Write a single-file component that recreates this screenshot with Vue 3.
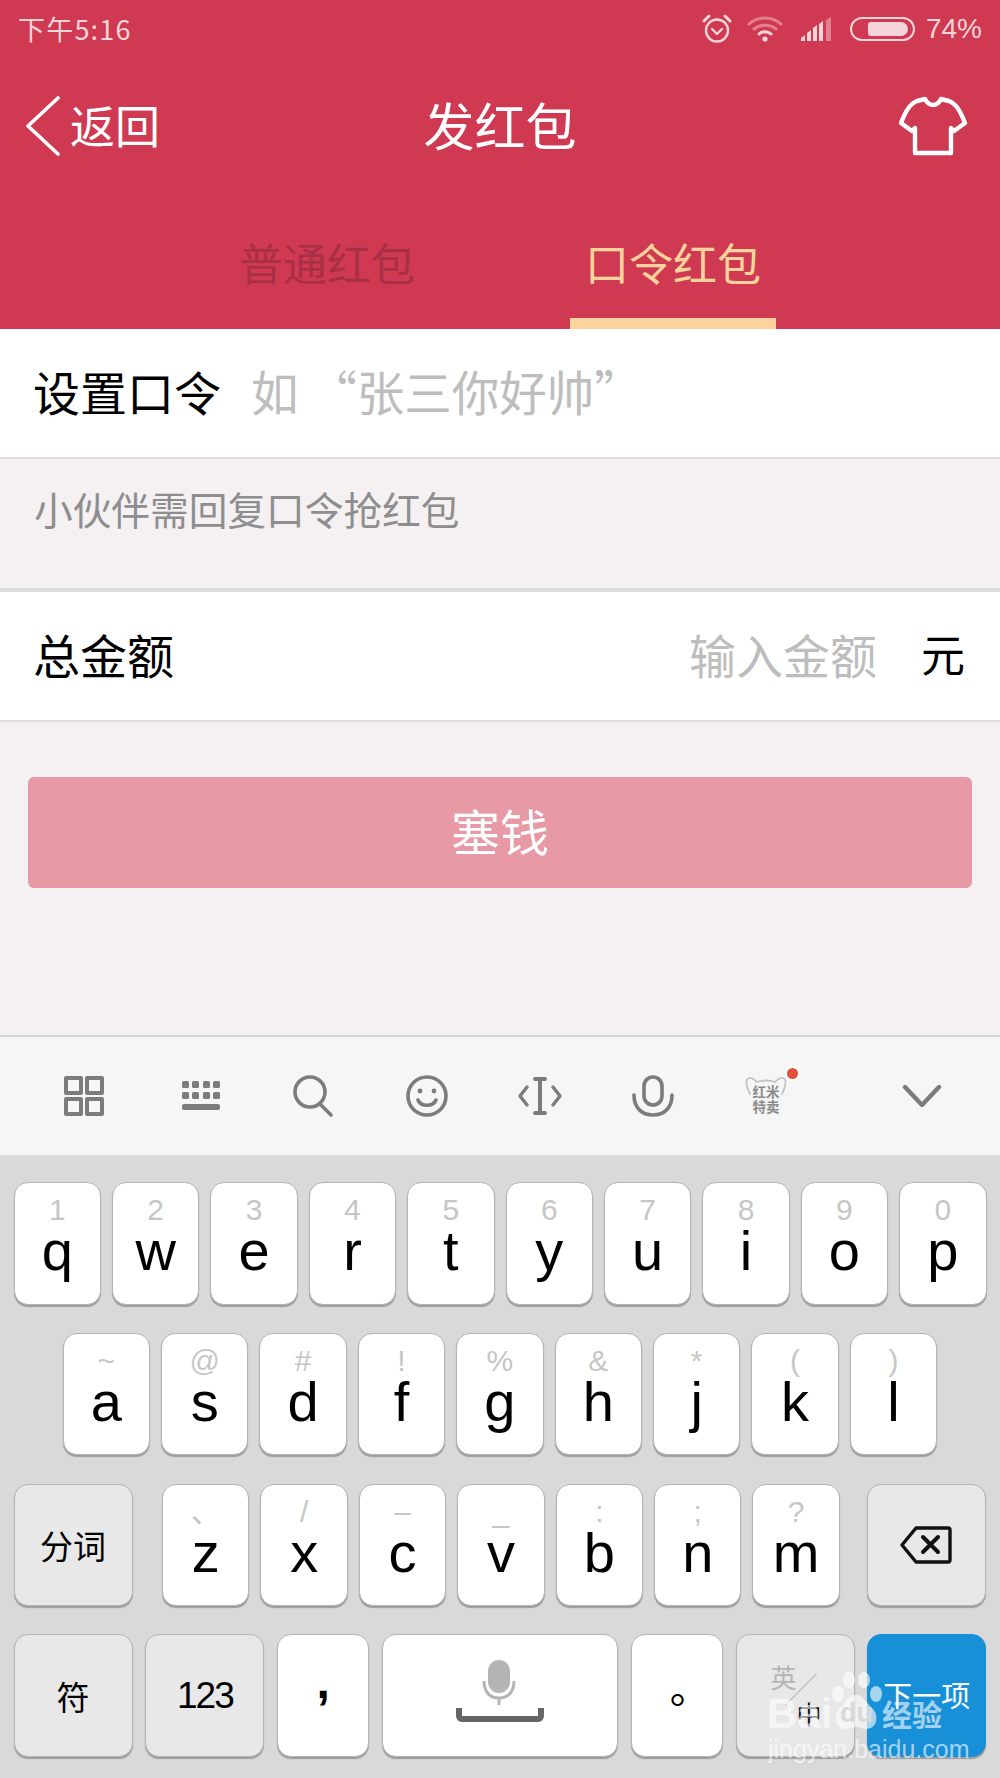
<template>
  <div class="page">
    <header class="head">
      <div class="status">
        <span class="time">下午5:16</span>
        <div class="status-right">
          <svg class="st-alarm" width="30" height="30" viewBox="0 0 30 30" fill="none" stroke="#f5d5da" stroke-width="2.4">
            <circle cx="15" cy="16.5" r="11" />
            <path d="M10 15l5 5 5-5" stroke-linecap="round" stroke-linejoin="round" />
            <path d="M2 7l5-5M28 7l-5-5" stroke-linecap="round" stroke-width="3" />
          </svg>
          <svg class="st-wifi" width="36" height="26" viewBox="0 0 36 26" fill="none" stroke-linecap="round">
            <path d="M2 8c9-8 23-8 32 0" stroke="#e2808f" stroke-width="3" />
            <path d="M7 13c6-5 16-5 22 0" stroke="#e2808f" stroke-width="3" />
            <path d="M12 18c3-3 9-3 12 0" stroke="#f5d5da" stroke-width="3" />
            <circle cx="18" cy="23" r="2.6" fill="#f5d5da" />
          </svg>
          <svg class="st-signal" width="33" height="24" viewBox="0 0 33 24" fill="#f5d5da">
            <path d="M0 24v-3l4-3v6zM6 24v-8l4-3v11zM12 24V11l4-3v16zM18 24V7l4-3v20z" />
            <path d="M25 24V3l5-3v24z" fill="#e2808f" />
          </svg>
          <span class="battery"><span class="battery-fill" /></span>
          <span class="percent">74%</span>
        </div>
      </div>

      <nav class="nav">
        <div class="back">
          <svg width="36" height="60" viewBox="0 0 36 60" fill="none" stroke="#fff" stroke-width="3.6" stroke-linecap="round" stroke-linejoin="round">
            <path d="M33 2L3 30l30 28" />
          </svg>
          <span>返回</span>
        </div>
        <h1>发红包</h1>
        <svg class="shirt" width="70" height="60" viewBox="0 0 70 60" fill="none" stroke="#fff" stroke-width="4.4" stroke-linejoin="round">
          <path d="M27 3c2 4 5 6 8 6s6-2 8-6l8 2c8 3 12 12 16 22l-11 8-3-3v25H17V32l-3 3-11-8c4-10 8-19 16-22z" />
        </svg>
      </nav>

      <div class="tabs">
        <div class="tab">普通红包</div>
        <div class="tab tab--active">口令红包</div>
      </div>
    </header>

    <div class="row">
      <span class="label">设置口令</span>
      <span class="hint">如 “张三你好帅”</span>
    </div>
    <p class="note">小伙伴需回复口令抢红包</p>
    <div class="row row--amount">
      <span class="label">总金额</span>
      <span class="hint amount-hint">输入金额</span>
      <span class="unit">元</span>
    </div>

    <div class="submit-wrap">
      <button class="submit" type="button">塞钱</button>
    </div>

    <div class="toolbar">
      <svg class="tb-grid" width="40" height="40" viewBox="0 0 40 40" fill="none" stroke="#7c7c7c" stroke-width="4" stroke-linejoin="round">
        <rect x="2" y="2" width="15" height="15" /><rect x="23" y="2" width="15" height="15" />
        <rect x="2" y="23" width="15" height="15" /><rect x="23" y="23" width="15" height="15" />
      </svg>
      <svg width="40" height="30" viewBox="0 0 40 30" fill="#7c7c7c">
        <rect x="1" y="0" width="7" height="7" rx="1.5" /><rect x="11" y="0" width="7" height="7" rx="1.5" />
        <rect x="22" y="0" width="7" height="7" rx="1.5" /><rect x="32" y="0" width="7" height="7" rx="1.5" />
        <rect x="1" y="11" width="7" height="7" rx="1.5" /><rect x="11" y="11" width="7" height="7" rx="1.5" />
        <rect x="22" y="11" width="7" height="7" rx="1.5" /><rect x="32" y="11" width="7" height="7" rx="1.5" />
        <rect x="1" y="23" width="38" height="6" rx="2" />
      </svg>
      <svg width="42" height="42" viewBox="0 0 42 42" fill="none" stroke="#7c7c7c" stroke-width="3.6" stroke-linecap="round">
        <circle cx="17" cy="17" r="15" /><path d="M27 29l11 11" />
      </svg>
      <svg width="42" height="42" viewBox="0 0 42 42" fill="none" stroke="#7c7c7c" stroke-width="3.6" stroke-linecap="round">
        <circle cx="21" cy="21" r="19" />
        <circle cx="14" cy="16" r="2.4" fill="#7c7c7c" stroke="none" /><circle cx="28" cy="16" r="2.4" fill="#7c7c7c" stroke="none" />
        <path d="M12 25c3 7 15 7 18 0" />
      </svg>
      <svg width="44" height="38" viewBox="0 0 44 38" fill="none" stroke="#7c7c7c" stroke-width="3.4" stroke-linecap="round" stroke-linejoin="round">
        <path d="M22 2v34M17 2h10M17 36h10" stroke-width="4" />
        <path d="M9 10L2 19l7 9M35 10l7 9-7 9" />
      </svg>
      <svg width="42" height="42" viewBox="0 0 42 42" fill="none" stroke="#7c7c7c" stroke-width="3.6" stroke-linecap="round">
        <rect x="12" y="2" width="18" height="28" rx="9" />
        <path d="M2 20c0 13 8 20 19 20s19-7 19-20" />
      </svg>
      <div class="tb-redmi">
        <svg width="42" height="20" viewBox="0 0 42 20" fill="none" stroke="#c4c4c4" stroke-width="1.8" stroke-linecap="round">
          <path d="M5 18C1 10 0 3 4 2c3-1 6 2 8 4 5-2 13-2 18 0 2-2 5-5 8-4 4 1 3 8-1 16" />
        </svg>
        <span class="redmi-text">红米<br>特卖</span>
        <i class="redmi-dot" />
      </div>
      <svg class="tb-last" width="40" height="24" viewBox="0 0 40 24" fill="none" stroke="#7c7c7c" stroke-width="4.4" stroke-linecap="round" stroke-linejoin="round">
        <path d="M3 3l17 18L37 3" />
      </svg>
    </div>

    <div class="keyboard">
      <div class="kb-row">
        <div v-for="k in row1" :key="k[0]" class="key">
          <span class="key-sub">{{ k[1] }}</span>
          <span class="key-main">{{ k[0] }}</span>
        </div>
      </div>
      <div class="kb-row kb-row--2">
        <div v-for="k in row2" :key="k[0]" class="key">
          <span class="key-sub">{{ k[1] }}</span>
          <span class="key-main">{{ k[0] }}</span>
        </div>
      </div>
      <div class="kb-row">
        <div class="key key--fn key--wide key--split">分词</div>
        <div v-for="k in row3" :key="k[0]" class="key">
          <span class="key-sub">{{ k[1] }}</span>
          <span class="key-main">{{ k[0] }}</span>
        </div>
        <div class="key key--fn key--wide key--del">
          <svg width="52" height="38" viewBox="0 0 52 38" fill="none" stroke="#111" stroke-width="3.4" stroke-linejoin="round" stroke-linecap="round">
            <path d="M16 2h32a2 2 0 0 1 2 2v30a2 2 0 0 1-2 2H16L2 19z" />
            <path d="M23 11l15 15M38 11L23 26" stroke-width="4" />
          </svg>
        </div>
      </div>
      <div class="kb-row kb-row--last">
        <div class="key key--fn key--wide">符</div>
        <div class="key key--fn key--wide key--num">123</div>
        <div class="key key--comma"><span>,</span></div>
        <div class="key key--space">
          <svg width="88" height="64" viewBox="0 0 88 64" fill="none">
            <rect x="32" y="1" width="22" height="33" rx="11" fill="#b4b4b4" />
            <path d="M28 22c0 11 6 17 15 17s15-6 15-17" stroke="#b4b4b4" stroke-width="3" />
            <path d="M43 38v8" stroke="#b4b4b4" stroke-width="3" />
            <path d="M3 49v8a3 3 0 0 0 3 3h76a3 3 0 0 0 3-3v-8" stroke="#666" stroke-width="6" />
          </svg>
        </div>
        <div class="key key--period"><span>。</span></div>
        <div class="key key--fn key--wide key--lang">
          <span class="lang-en">英</span>
          <i class="lang-slash" />
          <span class="lang-zh">中</span>
        </div>
        <div class="key key--wide key--next">下一项</div>
      </div>

      <!-- watermark sits on top of the last keys -->
      <div class="mark">
        <span class="mark-bai">Bai</span>
        <svg class="mark-paw" width="54" height="60" viewBox="0 0 54 60" fill="rgb(255 255 255 / 62%)">
          <ellipse cx="9" cy="23" rx="6" ry="8" />
          <ellipse cx="20" cy="9" rx="6" ry="8" />
          <ellipse cx="35" cy="9" rx="6" ry="8" />
          <ellipse cx="47" cy="23" rx="6" ry="8" />
          <path d="M27 24c8 0 10 8 16 13 7 6 6 21-6 21-4 0-7-2-10-2s-6 2-10 2C5 58 4 43 11 37c6-5 8-13 16-13z" />
        </svg>
        <span class="mark-du">du</span>
        <span class="mark-cn">经验</span>
        <span class="mark-url">jingyan.baidu.com</span>
      </div>
    </div>
  </div>
</template>

<script setup>
const row1 = [['q', '1'], ['w', '2'], ['e', '3'], ['r', '4'], ['t', '5'], ['y', '6'], ['u', '7'], ['i', '8'], ['o', '9'], ['p', '0']]
const row2 = [['a', '~'], ['s', '@'], ['d', '#'], ['f', '!'], ['g', '%'], ['h', '&'], ['j', '*'], ['k', '('], ['l', ')']]
const row3 = [['z', '、'], ['x', '/'], ['c', '–'], ['v', '_'], ['b', ':'], ['n', ';'], ['m', '?']]
</script>

<style scoped>
.page {
  width: 1000px;
  height: 1778px;
  overflow: hidden;
  background: #f5f0f2;
  font-family: "Noto Sans CJK SC", "Liberation Sans", sans-serif;
  color: #000;
}

.head {
  height: 329px;
  background: #cf3a52;
  color: #fff;
}

.status {
  display: flex;
  align-items: center;
  justify-content: space-between;
  height: 57px;
  padding: 0 18px;
}

.time {
  color: #f5d5da;
  font-size: 27px;
  letter-spacing: 1.2px;
}

.status-right {
  display: flex;
  align-items: center;
  color: #f5d5da;
}

.st-wifi {
  margin-left: 15px;
}

.st-signal {
  margin-left: 18px;
}

.battery {
  display: block;
  width: 65px;
  height: 24px;
  margin-left: 16px;
  padding: 3px 5px 3px 16px;
  border: 2px solid #f5d5da;
  border-radius: 12px;
  box-sizing: border-box;
}

.battery-fill {
  display: block;
  height: 100%;
  border-radius: 3px 7px 7px 3px;
  background: #f5d5da;
}

.percent {
  margin-left: 11px;
  font-family: "Liberation Sans", sans-serif;
  font-size: 28px;
}

.nav {
  display: flex;
  align-items: center;
  justify-content: space-between;
  height: 60px;
  margin-top: 39px;
  padding: 0 32px 0 25px;
  position: relative;
}

.back {
  display: flex;
  align-items: center;
  gap: 9px;
  font-size: 45px;
}

.back span {
  margin-bottom: 4px;
}

.nav h1 {
  position: absolute;
  left: 0;
  right: 0;
  top: -2px;
  margin: 0;
  text-align: center;
  font-size: 51px;
  font-weight: 400;
  line-height: 60px;
  pointer-events: none;
}

.tabs {
  display: flex;
  justify-content: center;
  gap: 140px;
  height: 173px;
  padding-top: 70px;
  box-sizing: border-box;
}

.tab {
  width: 206px;
  height: 103px;
  box-sizing: border-box;
  color: #a82f45;
  font-size: 44px;
  line-height: 72px;
  text-align: center;
}

.tab--active {
  border-bottom: 11px solid #fcd49b;
  color: #fcd49b;
}

.row {
  display: flex;
  align-items: center;
  height: 122px;
  padding: 0 35px 6px 33px;
  border-bottom: 2px solid #dedede;
  background: #fff;
}

.label {
  font-size: 47px;
}

.hint {
  margin-left: 30px;
  color: #bdbdbd;
  font-size: 47.5px;
  white-space: nowrap;
}

.note {
  height: 133px;
  margin: 0;
  padding: 27px 34px 0;
  box-sizing: border-box;
  border-bottom: 4px solid #dedede;
  color: #8e8e8e;
  font-size: 38.7px;
  line-height: 44px;
}

.amount-hint {
  margin-left: auto;
  font-size: 47px;
}

.unit {
  margin-left: 44px;
  font-size: 44px;
}

.submit-wrap {
  height: 313px;
  padding: 55px 28px 0;
  box-sizing: border-box;
}

.submit {
  display: block;
  width: 100%;
  height: 111px;
  padding: 0 0 6px;
  border: 0;
  border-radius: 6px;
  background: #e899a6;
  color: #fff;
  font: inherit;
  font-size: 49px;
}

.toolbar {
  display: grid;
  grid-template-columns: repeat(7, 113px) auto;
  align-items: center;
  justify-items: center;
  height: 122px;
  padding-left: 31.5px;
  box-sizing: border-box;
  border-top: 2px solid #d8d8d8;
  border-bottom: 2px solid #dedede;
  background: #f6f6f6;
}

.toolbar svg {
  display: block;
}

.tb-grid {
  margin-right: 8px;
}

.tb-redmi {
  position: relative;
  width: 42px;
  height: 40px;
}

.redmi-text {
  position: absolute;
  left: 0;
  right: 0;
  top: 8px;
  color: #8a8a8a;
  font-size: 13.5px;
  font-weight: 700;
  line-height: 15px;
  text-align: center;
}

.redmi-dot {
  position: absolute;
  top: -8px;
  left: 42px;
  width: 11px;
  height: 11px;
  border-radius: 50%;
  background: #e4503a;
  box-shadow: 0 0 0 2px #fff;
}

.tb-last {
  margin-left: 21px;
}

.keyboard {
  position: relative;
  display: flex;
  flex-direction: column;
  gap: 28.3px;
  height: 621px;
  padding: 25px 13.6px 0;
  box-sizing: border-box;
  background: #d9d9d9;
}

.kb-row {
  display: flex;
  gap: 11px;
  height: 122.5px;
}

.kb-row--2 {
  padding-left: 49px;
}

.kb-row--last {
  gap: 12.8px;
}

.key {
  flex: none;
  position: relative;
  display: block;
  width: 87.4px;
  height: 100%;
  box-sizing: border-box;
  padding-top: 12px;
  border: 1px solid #b4b4b4;
  border-radius: 14px;
  background: #fff;
  box-shadow: 0 2px 1px #9c9c9c;
  font-family: "Liberation Sans", "Noto Sans CJK SC", sans-serif;
  text-align: center;
}

.key-sub {
  display: block;
  height: 30px;
  color: #c6c6c6;
  font-size: 30px;
  line-height: 30px;
}

.key-main {
  display: block;
  font-size: 56px;
  line-height: 52px;
}

.key--fn {
  display: flex;
  align-items: center;
  justify-content: center;
  padding-top: 0;
  background: #e8e8e8;
  font-family: "Noto Sans CJK SC", sans-serif;
  font-size: 33px;
}

.key--wide {
  width: 119px;
}

.key--split {
  margin-right: 18.5px;
}

.key--del {
  display: flex;
  align-items: center;
  justify-content: center;
  margin-left: 16px;
}

.key--num {
  font-family: "Liberation Sans", sans-serif;
  font-size: 37px;
  letter-spacing: -2px;
}

.key--comma {
  width: 92px;
  font-size: 48px;
  font-weight: 700;
  line-height: 70px;
}

.key--space {
  width: 236px;
  padding-top: 24px;
}

.key--space svg {
  display: block;
  margin: 0 auto;
}

.key--period {
  width: 92px;
  padding: 0 0 0 26px;
  font-family: "Noto Sans CJK SC", sans-serif;
  font-size: 40px;
  line-height: 102px;
}

.key--lang {
  display: block;
}

.lang-en {
  position: absolute;
  left: 34px;
  top: 26px;
  color: #b5b5b5;
  font-size: 26px;
  line-height: 32px;
}

.lang-zh {
  position: absolute;
  left: 60px;
  top: 62px;
  color: #111;
  font-size: 25px;
  line-height: 32px;
}

.lang-slash {
  position: absolute;
  left: 42px;
  top: 54px;
  width: 44px;
  height: 1px;
  background: #b5b5b5;
  transform: rotate(-45deg);
}

.key--next {
  display: flex;
  align-items: center;
  justify-content: center;
  padding: 0 0 4px;
  border-color: #1890d8;
  background: #1890d8;
  color: #fff;
  font-family: "Noto Sans CJK SC", sans-serif;
  font-size: 29px;
}

/* keyboard starts at y 1157 */
.mark {
  position: absolute;
  left: 0;
  top: 0;
  width: 100%;
  height: 100%;
  color: rgb(255 255 255 / 62%);
  font-family: "Liberation Sans", sans-serif;
  pointer-events: none;
}

.mark span,
.mark-paw {
  position: absolute;
  white-space: nowrap;
}

.mark-bai {
  left: 767px;
  top: 533px;
  font-size: 42px;
  font-weight: 700;
  line-height: 48px;
}

.mark-paw {
  left: 829px;
  top: 514px;
}

.mark-du {
  left: 840px;
  top: 541px;
  color: #d9d9d9;
  font-size: 27px;
  font-weight: 700;
  line-height: 30px;
}

.mark-cn {
  left: 882px;
  top: 538px;
  font-family: "Noto Sans CJK SC", sans-serif;
  font-size: 30px;
  font-weight: 700;
  line-height: 36px;
}

.mark-url {
  left: 768px;
  top: 578px;
  font-size: 25px;
  line-height: 28px;
}
</style>
